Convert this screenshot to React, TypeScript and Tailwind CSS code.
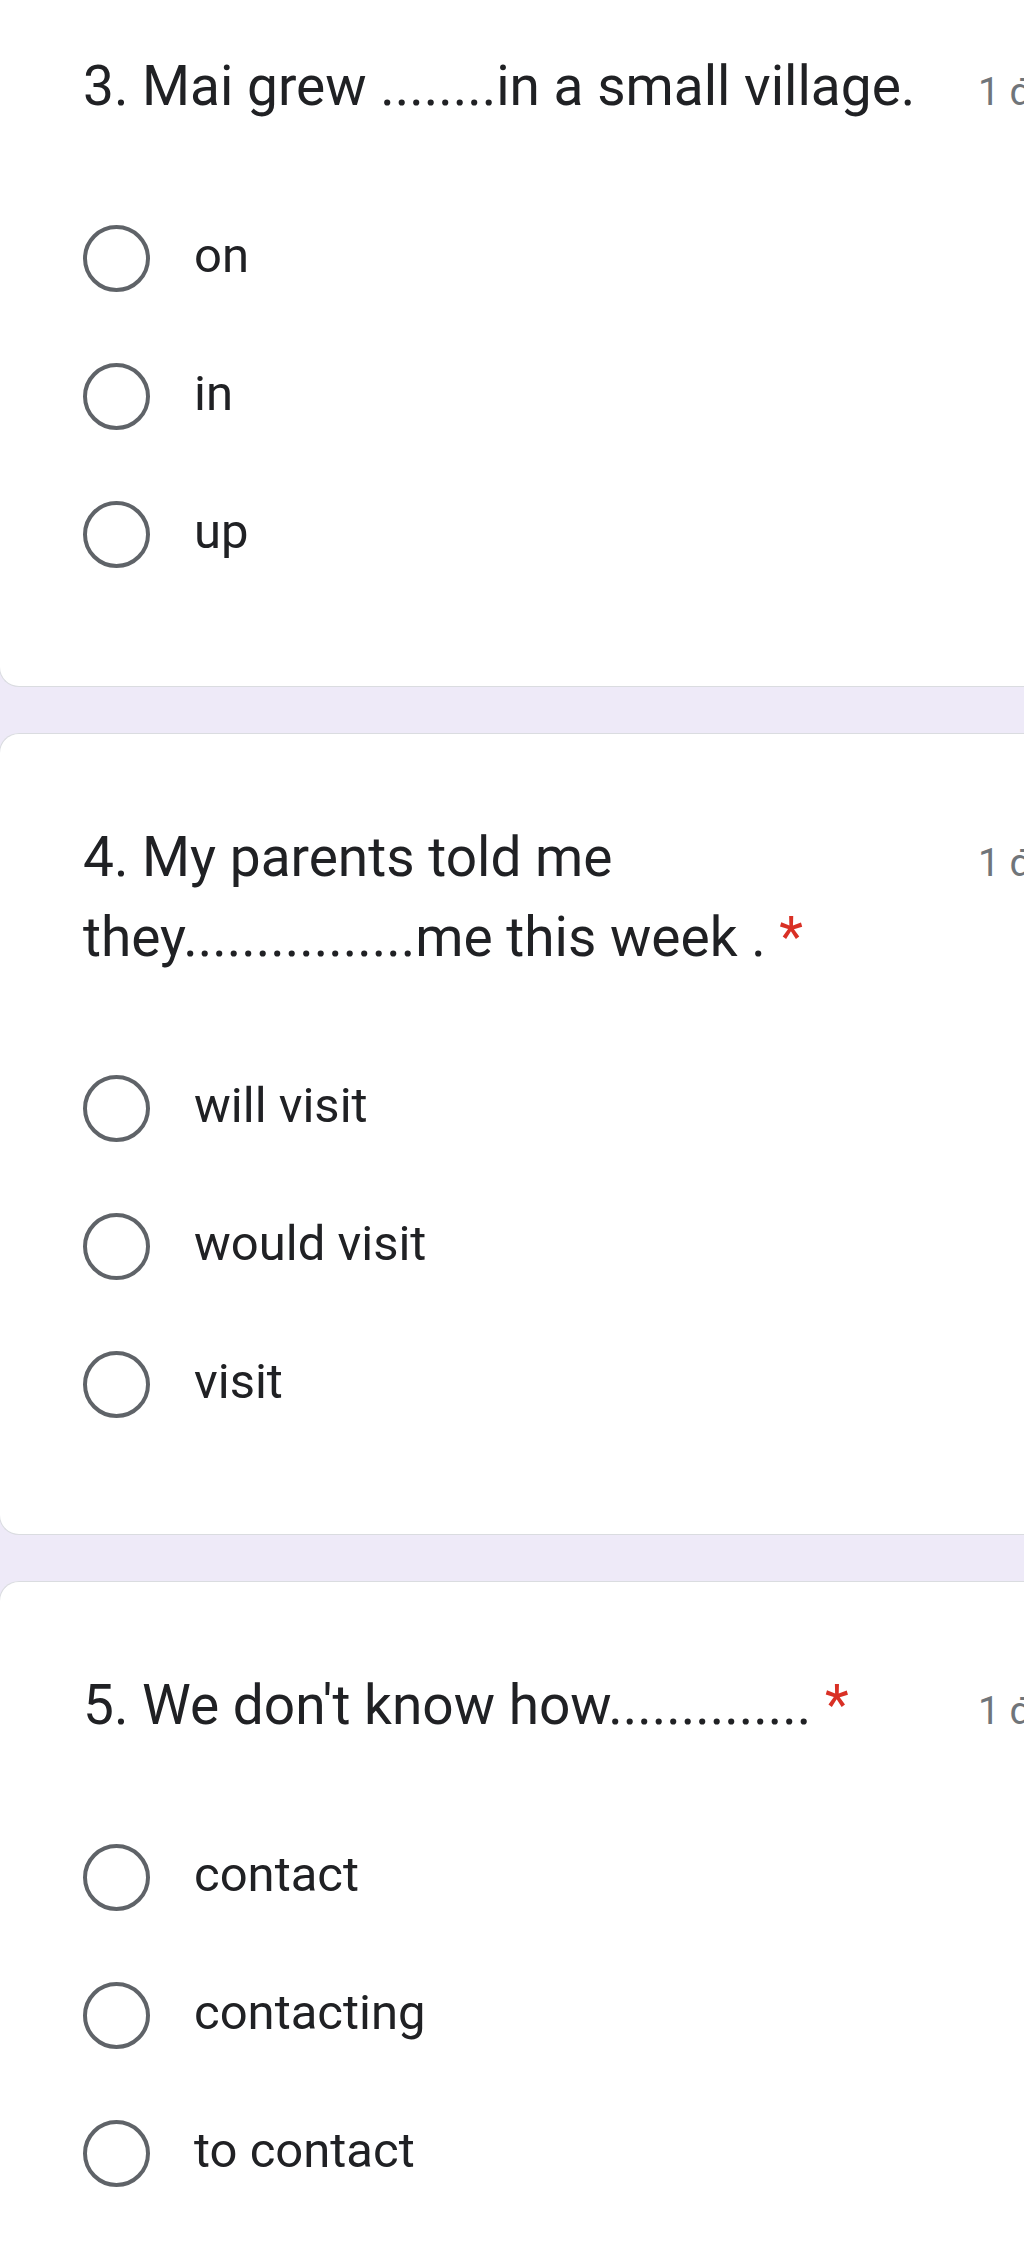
const FONT = { fontFamily: "Roboto, 'Noto Sans', Arial, sans-serif" };

type Question = {
  no: number;
  title: string;
  required?: boolean;
  options: string[];
};

const questions: Question[] = [
  {
    no: 3,
    title: "Mai grew ........in a small village.",
    options: ["on", "in", "up"],
  },
  {
    no: 4,
    title: "My parents told me they................me this week .",
    required: true,
    options: ["will visit", "would visit", "visit"],
  },
  {
    no: 5,
    title: "We don't know how..............",
    required: true,
    options: ["contact", "contacting", "to contact"],
  },
];

// Radio option row
const Option = ({ label }: { label: string }) => (
  <div className="flex h-[138px] items-center">
    <div className="h-[67px] w-[67px] shrink-0 rounded-full border-[4.5px] border-[#5f6368]" />
    <span className="ml-[44px] pb-[5px] text-[49px] leading-none text-[#202124]">
      {label}
    </span>
  </div>
);

const QuestionCard = ({ q, first }: { q: Question; first?: boolean }) => (
  <div
    className={`-ml-px w-[1025px] rounded-l-[20px] border border-r-0 border-[#dadce0] bg-white pl-[83px] pt-[83px] ${
      first ? "-mt-[38px]" : ""
    } ${q.no === 4 ? "pb-[81px]" : "pb-[83px]"}`}
  >
    <div className="flex items-baseline">
      <div className="w-[870px] shrink-0 text-[55px] leading-[80px] text-[#202124]">
        {q.no}. {q.title}
        {q.required && (
          <span className="text-[#d93025]"> *</span>
        )}
      </div>
      <div className="ml-[25px] whitespace-nowrap text-[39px] text-[#70757a]">
        1 điểm
      </div>
    </div>
    <div className={q.no === 4 ? "mt-[62px]" : "mt-[63px]"}>
      {q.options.map((o) => (
        <Option key={o} label={o} />
      ))}
    </div>
  </div>
);

export default function App() {
  return (
    <div
      className="flex h-[2256px] w-[1024px] flex-col gap-[46px] overflow-hidden bg-[#eeeaf8]"
      style={FONT}
    >
      {questions.map((q, i) => (
        <QuestionCard key={q.no} q={q} first={i === 0} />
      ))}
    </div>
  );
}
